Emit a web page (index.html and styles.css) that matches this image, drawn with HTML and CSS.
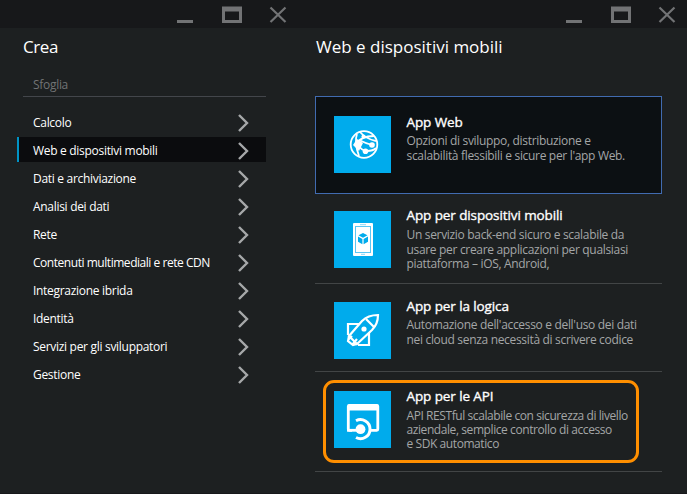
FILE: index.html
```html
<!DOCTYPE html>
<html lang="it">
<head>
<meta charset="utf-8">
<title>Crea</title>
<link rel="stylesheet" href="styles.css">
</head>
<body>
<svg width="0" height="0" class="defs">
  <symbol id="controls" viewBox="0 0 112 28">
    <path d="M2 21.5h16" stroke-width="3"/>
    <path d="M48.500 8.500h17v13h-17z" stroke-width="3"/><path d="M47 9h20" stroke-width="5"/>
    <path d="M95.500 7.5l15 14.5M110.500 7.5l-15 14.5" stroke-width="2.2"/>
  </symbol>
  <symbol id="chevron" viewBox="0 0 11 18"><path d="M1 1l8 8-8 8" fill="none" stroke="#a6a8a9" stroke-width="2.4"/></symbol>
</svg>
<div class="portal">
  <section class="blade browse">
    <header class="bar"><svg class="controls"><use href="#controls"/></svg></header>
    <h1>Crea</h1>
    <div class="search">Sfoglia</div>
    <ul class="menu">
      <li><span>Calcolo</span><svg><use href="#chevron"/></svg></li>
      <li class="selected"><span>Web e dispositivi mobili</span><svg><use href="#chevron"/></svg></li>
      <li><span>Dati e archiviazione</span><svg><use href="#chevron"/></svg></li>
      <li><span>Analisi dei dati</span><svg><use href="#chevron"/></svg></li>
      <li><span>Rete</span><svg><use href="#chevron"/></svg></li>
      <li><span class="tight">Contenuti multimediali e rete CDN</span><svg><use href="#chevron"/></svg></li>
      <li><span>Integrazione ibrida</span><svg><use href="#chevron"/></svg></li>
      <li><span>Identità</span><svg><use href="#chevron"/></svg></li>
      <li><span>Servizi per gli sviluppatori</span><svg><use href="#chevron"/></svg></li>
      <li><span>Gestione</span><svg><use href="#chevron"/></svg></li>
    </ul>
  </section>
  <section class="blade gallery">
    <header class="bar"><svg class="controls"><use href="#controls"/></svg></header>
    <h1>Web e dispositivi mobili</h1>
    <div class="items">
      <article class="item web">
        <svg class="tile" viewBox="0 0 57 57">
          <g fill="none" stroke="#fff" stroke-width="1.8">
            <circle cx="30" cy="28.500" r="13.300"/>
            <path d="M22 28Q27 20 40 20M26 16Q32 23 42 25M23 18Q20 26 25 40M24 29Q28 35 33 35Q39 35 42 32M25 24Q31 27 38 29"/>
          </g>
          <path d="M19 29l4-6 6 4-4 8z" fill="#fff"/>
          <circle cx="38" cy="29" r="2.800" fill="#fff"/><circle cx="31.500" cy="35.300" r="2.800" fill="#fff"/><circle cx="29.500" cy="20.500" r="2" fill="#fff"/>
        </svg>
        <div class="copy"><h2>App Web</h2><p>Opzioni di sviluppo, distribuzione e<br>scalabilità flessibili e sicure per l'app Web.</p></div>
      </article>
      <article class="item mobile">
        <svg class="tile" viewBox="0 0 57 57">
          <rect x="19" y="12" width="20" height="33" rx="1" fill="#fff"/>
          <rect x="21.500" y="15.500" width="15" height="26" fill="none" stroke="#5cc6f3"/>
          <path d="M26 13.700h6" stroke="#8dd8f7"/><path d="M27 43.300h4" stroke="#8dd8f7"/>
          <path d="M29 22l4.500 2.300-4.500 2.400-4.500-2.400zM24 25.500l4.400 2.400v5.300L24 30.700zM34 25.500l-4.400 2.400v5.300l4.400-2.500z" fill="#00abec"/>
        </svg>
        <div class="copy"><h2>App per dispositivi mobili</h2><p>Un servizio back-end sicuro e scalabile da<br>usare per creare applicazioni per qualsiasi<br>piattaforma – iOS, Android,</p></div>
      </article>
      <article class="item logic">
        <svg class="tile" viewBox="0 0 57 57">
          <g fill="none" stroke="#fff" stroke-width="2.200">
            <path d="M25 22H14v11M35 30v13H24"/>
            <path d="M44 13C37 13 32 15 28 19L15 34l8 8 15-14C42 24 44 19 44 13z" fill="#00abec"/>
            <path d="M32 17l8 8M15 34l-1 5 5 4 4-1M18 43l5-6M14 38l4-4"/>
          </g>
          <circle cx="30" cy="27" r="2.600" fill="#fff"/>
        </svg>
        <div class="copy"><h2>App per la logica</h2><p>Automazione dell'accesso e dell'uso dei dati<br>nei cloud senza necessità di scrivere codice</p></div>
      </article>
      <article class="item api">
        <svg class="tile" viewBox="0 0 57 57">
          <rect x="14.300" y="14.300" width="29.500" height="25" rx="1" fill="none" stroke="#fff" stroke-width="2.800"/>
          <path d="M14 16.500h30" stroke="#fff" stroke-width="6"/>
          <path d="M21 30A9 9 0 1 1 21 46.500z" fill="#00abec" stroke="#00abec" stroke-width="6"/>
          <path d="M13 39.300h13" stroke="#fff" stroke-width="2.800"/>
          <circle cx="26.500" cy="38.200" r="4.900" fill="#fff"/>
          <path d="M22 29.800A9.500 9.500 0 1 1 22 46.500" fill="none" stroke="#fff" stroke-width="3"/>
        </svg>
        <div class="copy"><h2>App per le API</h2><p class="tight">API RESTful scalabile con sicurezza di livello<br>aziendale, semplice controllo di accesso<br>e SDK automatico</p></div>
        <div class="highlight"></div>
      </article>
    </div>
  </section>
</div>
</body>
</html>
```
FILE: styles.css
```css
* { box-sizing: border-box; }
body { margin: 0; width: 687px; height: 494px; overflow: hidden; background: #1d2021; color: #fff; font-family: "Open Sans", "Noto Sans", sans-serif; }
.defs { position: absolute; }
.portal { display: grid; grid-template-columns: 300px 387px; height: 494px; border-bottom: 1px solid #17181a; }
.blade { min-width: 0; }
.bar { display: flex; justify-content: flex-end; height: 28px; background: #17181a; }
.controls { width: 112px; height: 28px; fill: none; stroke: #727375; }
.browse .controls { margin-right: 13px; }
.gallery .controls { margin-right: 11px; }
h1, h2, p, ul { margin: 0; padding: 0; font-weight: 400; white-space: nowrap; }
h1 { height: 38px; font-size: 17px; line-height: 38px; }
.browse h1 { padding-left: 23px; letter-spacing: -.4px; }
.gallery h1 { padding-left: 16px; }
.search { width: 243px; height: 31px; margin-left: 23px; padding-left: 10px; border-bottom: 1px solid #43464b; color: #727475; font-size: 12px; line-height: 38px; letter-spacing: -.3px; }
.menu { width: 249px; margin: 12px 0 0 17px; list-style: none; }
.menu li { display: flex; justify-content: space-between; align-items: center; height: 25px; margin-bottom: 3px; padding: 2px 17px 0 13px; border-left: 3px solid transparent; font-size: 12px; letter-spacing: -.3px; }
.menu li.selected { border-left: 2px solid #0093c5; padding-left: 14px; background: #0b0c0e; }
.menu .tight { letter-spacing: -.46px; }
.menu svg { width: 11px; height: 18px; margin-top: 1px; }
.items { width: 347px; margin: 30px 0 0 15px; }
.item { position: relative; display: flex; gap: 15.5px; padding-left: 19px; border-bottom: 1px solid #424546; }
.tile { flex: none; width: 57px; height: 57px; background: #00abec; }
.web { height: 98px; padding: 19px 0 0 18px; border: 1px solid #416bb0; background: #0c1013; }
.mobile { height: 90px; padding-top: 17px; }
.logic { height: 88px; padding-top: 18px; }
.api { height: 100px; padding-top: 19px; }
.copy { margin-top: -5px; }
.web .copy { margin-top: -3px; }
.api .copy { margin-top: -4px; }
h2 { font-size: 13.5px; line-height: 18px; letter-spacing: -.1px; -webkit-text-stroke: .35px #fff; }
p { margin-top: 3px; color: #a4a6a7; font-size: 12px; line-height: 14.7px; letter-spacing: -.32px; }
.mobile p { margin-top: 4px; }
.api p { margin-top: 4px; line-height: 14.2px; }
p.tight { letter-spacing: -.42px; }
.highlight { position: absolute; left: 8px; top: 8px; width: 316px; height: 83px; border: 3px solid #ff8f00; border-radius: 11px; }
```
